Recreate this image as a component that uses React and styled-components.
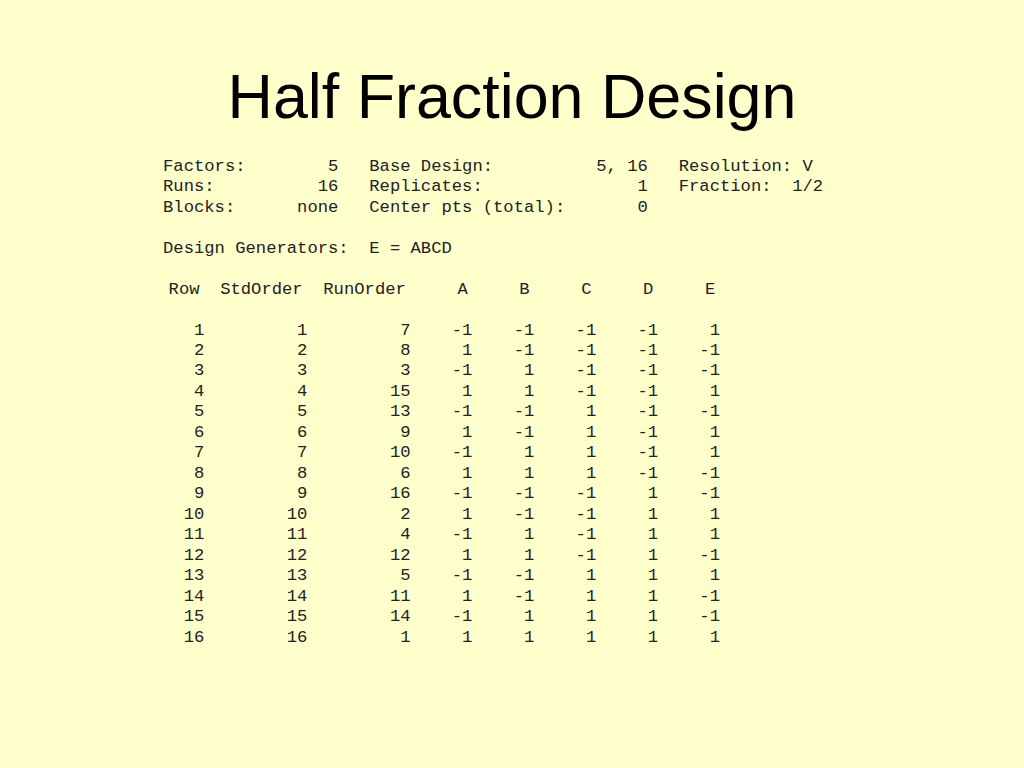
import React from "react";
import styled, { createGlobalStyle } from "styled-components";

const GlobalStyle = createGlobalStyle`
  html, body {
    margin: 0;
    padding: 0;
    background: #ffffcc;
  }
`;

const Slide = styled.div`
  width: 1024px;
  height: 768px;
  background: #ffffcc;
  display: flex;
  flex-direction: column;
  overflow: hidden;
`;

const Title = styled.h1`
  margin: 65px 0 0;
  font-family: "Liberation Sans", Arial, sans-serif;
  font-weight: normal;
  font-size: 62.8px;
  line-height: 1;
  color: #000;
  text-align: center;
`;

const Output = styled.div`
  margin-top: 29px;
  padding-left: 163px;
  font-family: "Liberation Mono", "Courier New", monospace;
  font-size: 17.2px;
  line-height: 20.47px;
  color: #222;
`;

const Line = styled.div`
  white-space: pre;
  height: 20.47px;
  padding-left: ${(p) => (p.$shift ? "5.6px" : "0")};
`;

// label, value (right-aligned to col 16), label, value (right-aligned to col 46), extra
const cell = (label, value, width) => label + String(value).padStart(width - label.length);

const summary = [
  cell("Factors:", "5", 17) + "   " + cell("Base Design:", "5, 16", 27) + "   Resolution: V",
  cell("Runs:", "16", 17) + "   " + cell("Replicates:", "1", 27) + "   Fraction:  1/2",
  cell("Blocks:", "none", 17) + "   " + cell("Center pts (total):", "0", 27),
  "",
  "Design Generators:  E = ABCD",
  "",
];

const header = "Row  StdOrder  RunOrder     A     B     C     D     E";

const runs = [
  [7, -1, -1, -1, -1, 1],
  [8, 1, -1, -1, -1, -1],
  [3, -1, 1, -1, -1, -1],
  [15, 1, 1, -1, -1, 1],
  [13, -1, -1, 1, -1, -1],
  [9, 1, -1, 1, -1, 1],
  [10, -1, 1, 1, -1, 1],
  [6, 1, 1, 1, -1, -1],
  [16, -1, -1, -1, 1, -1],
  [2, 1, -1, -1, 1, 1],
  [4, -1, 1, -1, 1, 1],
  [12, 1, 1, -1, 1, -1],
  [5, -1, -1, 1, 1, 1],
  [11, 1, -1, 1, 1, -1],
  [14, -1, 1, 1, 1, -1],
  [1, 1, 1, 1, 1, 1],
];

const formatRow = (i, r) => {
  const [run, ...factors] = r;
  return (
    String(i + 1).padStart(4) +
    String(i + 1).padStart(10) +
    String(run).padStart(10) +
    factors.map((f) => String(f).padStart(6)).join("")
  );
};

export default function App() {
  return (
    <>
      <GlobalStyle />
      <Slide>
        <Title>Half Fraction Design</Title>
        <Output>
          {summary.map((s, i) => (
            <Line key={"s" + i}>{s}</Line>
          ))}
          <Line $shift>{header}</Line>
          <Line />
          {runs.map((r, i) => (
            <Line key={"r" + i}>{formatRow(i, r)}</Line>
          ))}
        </Output>
      </Slide>
    </>
  );
}
